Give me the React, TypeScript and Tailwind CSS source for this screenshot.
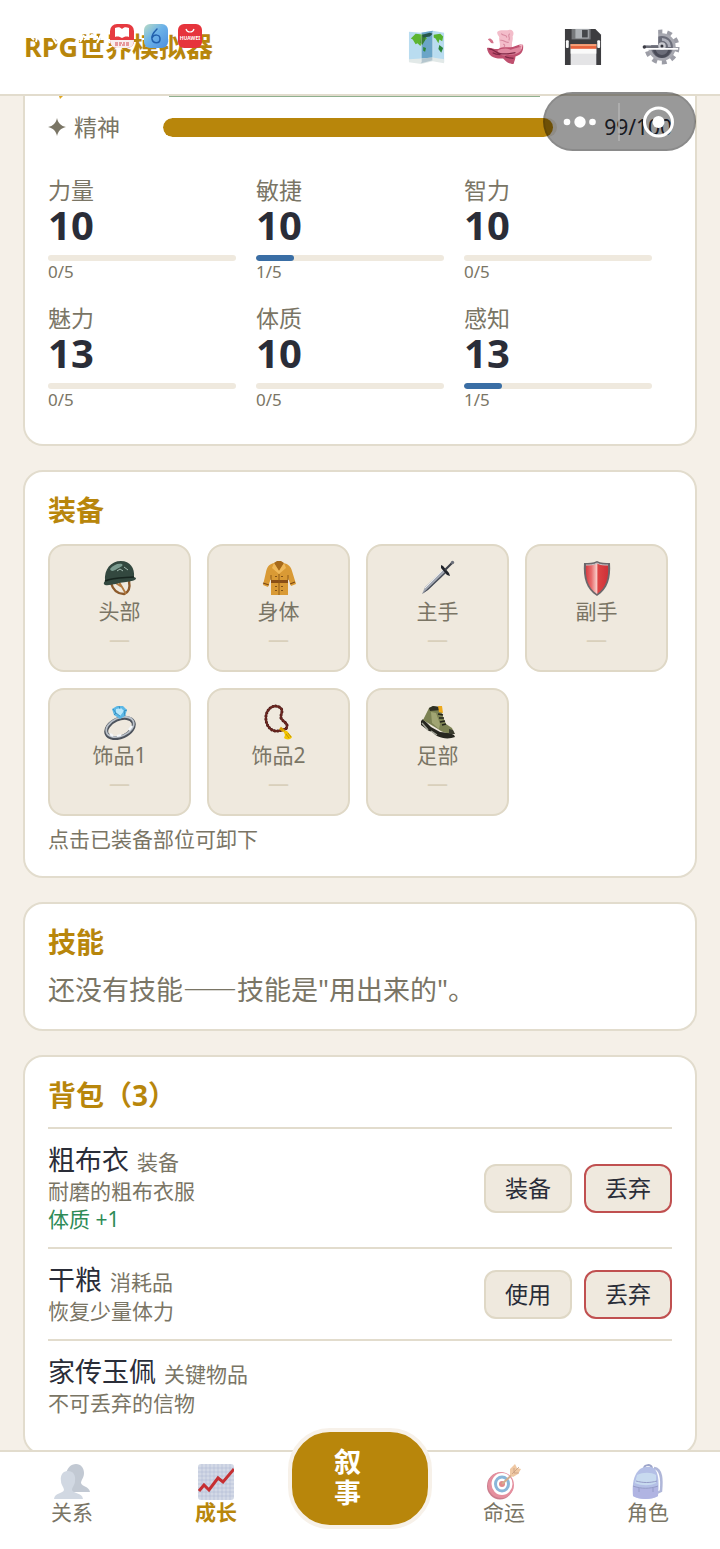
import React from "react"
import clsx from "clsx"

interface Attribute {
  name: string
  value: number
  progress: number
}

interface Slot {
  label: string
  icon: React.ReactNode
}

interface Item {
  name: string
  type: string
  description: string
  effect?: string
  action?: string
}

const MapIcon = () => (
  <svg viewBox="0 0 40 40" className="size-[38px]">
    <path d="M1 4l13 1 12-2 12 2v31l-12-2-12 3-13-2z" fill="#b9dcf0" />
    <path d="M14 5l12-2v31l-12 3z" fill="#6ba5c8" />
    <path d="M1 33l13-1 12-1 12 2v4l-12-2-12 3-13-2z" fill="#e2e9e8" />
    <path d="M14 32l12-1v3l-12 3z" fill="#b5c6ce" />
    <path d="M3 11l5-5 9 1 3 4-4 3-3 5-3-3-2 1-3-5z" fill="#5cb531" />
    <path d="M14 7l5 1-1 5-3 5-2-3z" fill="#3a7f34" />
    <path d="M27 7l7-1 3 3-1 5-3-2-1 4-3-5-2-1z" fill="#57b22d" />
    <path d="M16 20l3 1-1 4-2-1zM33 18l4 3-2 5-3-4z" fill="#2c8738" />
    <path d="M15 7l8-2 3 1-3 3-7 1z" fill="#27564c" />
    <path d="M14 5v31M26 4v30" stroke="#ffffff" strokeOpacity=".4" strokeWidth="1" />
  </svg>
)

const BrainIcon = () => (
  <svg viewBox="0 0 40 40" className="size-[38px]">
    <path d="M12 4c3-3 8-1 12-2 5-1 6 4 4 7 1 4-2 6 0 13H14c2-5-1-9 0-12 0-2-3-3-2-6z" fill="#f3bdca" />
    <path d="M1 21c4-1 8 2 12 1 5-3 9-1 15-2 4-1 8-4 11-2 1 7-3 11-8 12 0 3-1 4-2 8-5 0-8-3-11-6-8 1-16-2-17-11z" fill="#bf506f" />
    <path d="M12 24c5-3 10-3 14-1 4-2 9-2 11-4 1 2 1 5-3 7-5 3-9 1-14 3-4 0-7-2-8-5z" fill="#e089a0" />
    <path d="M3 22c5 0 7 4 12 5s10 0 16-1M20 30c3 2 6 1 9 2M7 26c3 2 6 2 8 2" stroke="#7e2744" strokeWidth="1.3" fill="none" />
    <path d="M16 6c3 3 5 0 6 4M25 6c-3 2 1 4-1 7M15 13c4-1 5 3 9 2M18 17c2 0 2 2 1 3" stroke="#d7899f" strokeWidth="1.1" fill="none" />
    <path d="M2 12c2-3 6 1 6 4-3 1-4-3-6-4z" fill="#d3728a" />
    <path d="M35 19l3-1-1 4" stroke="#f2b1c0" strokeWidth="1.2" fill="none" />
  </svg>
)

const SaveIcon = () => (
  <svg viewBox="0 0 40 40" className="size-[38px]">
    <path d="M1 1h32l6 6v32H1z" fill="#3d3d40" />
    <path d="M8 1h20v11H8z" fill="#77797c" />
    <path d="M12 1h14v10H12z" fill="#aeb2b6" />
    <path d="M19 2h6v8h-6z" fill="#45474a" />
    <path d="M7 17h27v22H7z" fill="#e4e4e6" />
    <path d="M7 17h27v5H7z" fill="#e8633c" />
    <path d="M7 17h27v2H7z" fill="#f4a27a" />
    <path d="M7 22h27v5H7z" fill="#fafafa" />
    <rect x="2" y="13" width="3" height="8" rx="1" fill="#f7f7f7" />
    <rect x="35" y="13" width="3" height="8" rx="1" fill="#f7f7f7" />
  </svg>
)

const GearIcon = () => (
  <svg viewBox="0 0 40 40" className="size-[38px]">
    <circle cx="21" cy="20" r="16" fill="none" stroke="#9c9da6" strokeWidth="5" strokeDasharray="5 5.050" />
    <circle cx="21" cy="20" r="13" fill="#6b6d79" stroke="#a7a8b0" strokeWidth="3" />
    <path d="M21 12a8 8 0 0 1 8 8" fill="none" stroke="#aeb0ba" strokeWidth="3" />
    <path d="M13 22a8 8 0 0 0 16 0" fill="none" stroke="#4a4c58" strokeWidth="3" />
    <path d="M0 0h17v18H0z" fill="#ffffff" />
    <circle cx="21" cy="19" r="4" fill="#c9cad0" />
    <circle cx="21" cy="19" r="1.6" fill="#33343c" />
    <path d="M3 21h35v2H3z" fill="#ffffff" />
    <path d="M1 19h16v2H1z" fill="#6d6f79" />
    <circle cx="2.500" cy="20" r="1.8" fill="#3b3c44" />
  </svg>
)

const HelmetIcon = () => (
  <svg viewBox="0 0 36 36" className="size-9">
    <path d="M9 23c2 7 7 11 13 11 6-2 6-8 5-13" fill="none" stroke="#8c5a2b" strokeWidth="2.400" />
    <path d="M12 22l8 5 4 7M17 22l3 5" fill="none" stroke="#b37a3f" strokeWidth="1.800" />
    <path d="M3 21C2 9 9 1 19 1c9 0 14 7 13 16l2 1c0 3-5 3-10 4-9 1-16 4-21 3-2-1-1-3 0-4z" fill="#33483f" />
    <path d="M8 9c3-4 8-6 12-5 2 2-2 3-5 5s-6 3-7 0z" fill="#7c9c90" />
    <path d="M3 21c9-4 20-3 29-4" fill="none" stroke="#17251f" strokeWidth="1.500" />
    <path d="M15 11l3-2 3 2M22 7l4 3" stroke="#a5bcb2" strokeWidth="1" fill="none" />
  </svg>
)

const CoatIcon = () => (
  <svg viewBox="0 0 36 36" className="size-9">
    <path d="M13 3C8 4 6 7 5 12L2 25l5 2 3-9v17h17V18l3 8 5-2-4-13c-1-4-3-7-9-8l-4-2z" fill="#d99a35" />
    <path d="M13 3l5 8 5-8-3-2h-4z" fill="#a66a1c" />
    <path d="M13 3l-2 5 7 6 7-6-2-5-5 8z" fill="#efb95b" />
    <path d="M10 20h17v3H10z" fill="#8a4f16" />
    <path d="M18 14v21M10 15v5M27 15v5" stroke="#8f5a19" strokeWidth="1" />
    <path d="M15 16v1M21 16v1M15 26v1M21 26v1M15 30v1M21 30v1" stroke="#653c10" strokeWidth="1.500" />
    <path d="M2 23l6 2M29 24l5-2" stroke="#7e4a14" strokeWidth="1.200" />
  </svg>
)

const SwordIcon = () => (
  <svg viewBox="0 0 36 36" className="size-9">
    <path d="M2 34l3-7L24 9l3 3L8 30z" fill="#a4a9b3" />
    <path d="M2 34L26 11l1 1L8 30z" fill="#454a55" />
    <path d="M5 28L23 10" stroke="#e4e7ec" strokeWidth="1" />
    <path d="M21 5l2 1 6 7 1 3-3-1-6-7z" fill="#20232a" />
    <path d="M25 10l7-7" stroke="#3d4049" strokeWidth="2.200" />
    <circle cx="32.500" cy="2.500" r="1.700" fill="#6d717b" />
  </svg>
)

const ShieldIcon = () => (
  <svg viewBox="0 0 36 36" className="size-9">
    <defs>
      <linearGradient id="shield" x1="0" y1="0" x2="1" y2="0">
        <stop offset="0" stopColor="#d63a40" />
        <stop offset=".25" stopColor="#e86d6d" />
        <stop offset=".48" stopColor="#f8c8c4" />
        <stop offset=".55" stopColor="#dc4444" />
        <stop offset="1" stopColor="#cf3038" />
      </linearGradient>
    </defs>
    <path d="M5 3c5 0 9 0 13-2 4 2 8 2 13 2 1 15-2 26-13 33C7 29 4 18 5 3z" fill="#6b676b" />
    <path d="M7 5c4 0 8 0 11-2 3 2 7 2 11 2 1 13-2 23-11 29C9 28 6 18 7 5z" fill="url(#shield)" />
    <path d="M7 5c4 0 8 0 11-2 3 2 7 2 11 2" stroke="#c9c6c9" strokeWidth="1" fill="none" />
  </svg>
)

const RingIcon = () => (
  <svg viewBox="0 0 36 36" className="size-9">
    <ellipse cx="18" cy="24" rx="14.500" ry="9" transform="rotate(-24 18 24)" fill="none" stroke="#4d535c" strokeWidth="4" />
    <ellipse cx="18" cy="23" rx="14.500" ry="9" transform="rotate(-24 18 23)" fill="none" stroke="#b9c0c8" strokeWidth="1.800" />
    <path d="M8 30l3 2M15 32l4-1M27 26l3-4" stroke="#f4f7fa" strokeWidth="2.200" />
    <path d="M10 5l5-3 6 0 4 4-2 6-5 3-6-4z" fill="#5cb8e6" />
    <path d="M14 5l5-1 3 3-4 5-4-3z" fill="#b8e7fa" />
    <path d="M11 5l3 4-2 2M25 6l-3 1 1 5M17 2l1 3M14 9l4 3" stroke="#2f86b8" strokeWidth=".8" fill="none" />
  </svg>
)

const BeadsIcon = () => (
  <svg viewBox="0 0 36 36" className="size-9">
    <path
      d="M17 27C9 28 4 20 5 12 6 5 12 0 18 3c6 3 1 7 2 11 2 4 7 5 6 9-1 3-5 3-9 4z"
      fill="none"
      stroke="#4a1715"
      strokeWidth="3"
      strokeLinecap="round"
      strokeDasharray="0.5 2.600"
    />
    <path
      d="M17 27C9 28 4 20 5 12 6 5 12 0 18 3c6 3 1 7 2 11 2 4 7 5 6 9-1 3-5 3-9 4z"
      fill="none"
      stroke="#6d2720"
      strokeWidth="1.500"
    />
    <path d="M19 24l4 3" stroke="#d69a00" strokeWidth="3" />
    <path d="M22 26l4 1 5 6c-1 3-6 3-8 1l1-3z" fill="#f2c500" />
    <path d="M25 30l3 4M27 29l3 4" stroke="#b88600" strokeWidth=".8" />
  </svg>
)

const BootIcon = () => (
  <svg viewBox="0 0 36 36" className="size-9">
    <path d="M1 17l2-2 8 8 9 5 10 1 4 2 1 2c-5 2-12 2-18-1-3-2-5-5-8-5L1 21z" fill="#26261f" />
    <path d="M9 4l4-2 8 2 2 9 3 7 6 4 2 5c-6 1-11 0-16-4L3 16z" fill="#7c8253" />
    <path d="M9 4l4-2 8 1v3L10 7z" fill="#2f3024" />
    <path d="M18 2h4l1 7-4-1z" fill="#eda91c" />
    <path d="M11 8l1 11 7 6 1-5-4-11z" fill="#a1a573" />
    <path d="M18 10l5 1M19 14l5 0M20 18l5-1M22 21l4-1" stroke="#22241b" strokeWidth="1.500" />
    <path d="M2 19l6 7M11 27l6 4" stroke="#a5a79a" strokeWidth="1.400" />
    <path d="M29 25l4 1 2 4-6 0z" fill="#3a3b2e" />
  </svg>
)

const PeopleIcon = () => (
  <svg viewBox="0 0 36 36" className="size-9 opacity-60">
    <path d="M22 0c5 0 8 4 8 9 0 5-3 7-3 10 1 4 8 3 9 9H12V10c1-6 5-10 10-10z" fill="#9aa6b6" />
    <path d="M14 7c5 0 8 4 7 10 0 4-3 6-3 9 1 4 10 2 11 9H0c1-7 9-5 10-9 0-3-3-5-3-9-1-6 2-10 7-10z" fill="#b3bfd0" />
  </svg>
)

const ChartIcon = () => (
  <svg viewBox="0 0 36 36" className="size-9">
    <rect width="36" height="36" rx="3" fill="#d3d9e6" />
    <path
      d="M4 0v36M8 0v36M12 0v36M16 0v36M20 0v36M24 0v36M28 0v36M32 0v36M0 4h36M0 8h36M0 12h36M0 16h36M0 20h36M0 24h36M0 28h36M0 32h36"
      stroke="#a9b4d0"
      strokeWidth=".5"
    />
    <path d="M1 27l5-6 5 5 9-12 5 4L36 5" stroke="#c62f32" strokeWidth="3" fill="none" />
  </svg>
)

const TargetIcon = () => (
  <svg viewBox="0 0 36 36" className="size-9 opacity-60">
    <ellipse cx="14" cy="22" rx="13" ry="13.500" fill="#a82742" />
    <ellipse cx="15" cy="21" rx="13" ry="13" fill="#d4465f" />
    <ellipse cx="16" cy="20" rx="10.500" ry="11" fill="#ffffff" />
    <ellipse cx="16" cy="20" rx="8" ry="8.500" fill="#3d86c0" />
    <ellipse cx="16" cy="20" rx="5" ry="5.500" fill="#ffffff" />
    <ellipse cx="16" cy="20" rx="3" ry="3" fill="#cf3d3d" />
    <path d="M16 20L29 8" stroke="#b87842" strokeWidth="2" />
    <path d="M24 11l0-6 5-5 2 4 4 1-3 5-5 3z" fill="#e6a467" />
    <path d="M26 10l7-7M28 4v5h5" stroke="#a25e2d" strokeWidth=".8" fill="none" />
  </svg>
)

const BackpackIcon = () => (
  <svg viewBox="0 0 36 36" className="size-9 opacity-60">
    <path d="M24 4c8 1 8 12 7 23l-4 2" fill="none" stroke="#7c88c0" strokeWidth="2.500" />
    <path d="M14 5c0-5 7-5 8-1" fill="none" stroke="#5d6aa8" strokeWidth="2" />
    <path d="M10 5c5-3 11-3 15 0 4 6 4 14 3 27-5 4-20 4-25 0-1-10 0-21 7-27z" fill="#8396d6" />
    <path d="M7 11c6-3 14-3 19 0v8c-6 3-14 3-21 0z" fill="#a5c3e6" />
    <path d="M3 22c8 3 17 3 25 0v10c-7 4-18 4-25 0z" fill="#7d83d0" />
    <path d="M3 22c8 3 17 3 25 0M6 17c7 2 14 2 21 0M9 24v4M23 24v4" stroke="#4f5ba3" strokeWidth="1" fill="none" />
  </svg>
)

// device status icons that sit over the page title
const StatusIcons = () => (
  <svg viewBox="0 0 200 34" className="pointer-events-none absolute left-6 top-5 h-[34px] w-[200px]">
    <g fill="none" stroke="#ffffff" strokeWidth="2">
      <path d="M5 15l5 5M12 22l2-9M27 15l5 8 8-6M56 22l4-7M60 20l8-5 8 5M73 23l4-8" />
      <path d="M60 17h14M80 15l6 8M82 20h4" />
    </g>
    <rect x="86" y="4" width="24" height="24" rx="7" fill="#e63a40" />
    <path d="M86 20h24c0 5-3 8-7 8H93c-4 0-7-3-7-8z" fill="#f7eeee" />
    <path d="M91 8c3-1 5-1 7 1 2-2 4-2 7-1v9c-3-1-5 0-7 1-2-1-4-2-7-1z" fill="#ffffff" />
    <path d="M91 23h3M95 23h3M99 23h2M102 23h3M91 25h3M95 25h2M98 25h3M102 25h3" stroke="#d7444b" strokeWidth="1" />
    <defs>
      <linearGradient id="six" x1="0" y1="0" x2="1" y2="1">
        <stop offset="0" stopColor="#b9dcc5" />
        <stop offset=".45" stopColor="#6cb2e8" />
        <stop offset="1" stopColor="#4d8fe0" />
      </linearGradient>
    </defs>
    <rect x="120" y="4" width="24" height="24" rx="6" fill="url(#six)" />
    <path d="M133 9c-4 4-6 7-5 10 1 5 8 5 8 0 0-5-6-5-8-1" fill="none" stroke="#2260ad" strokeWidth="1.500" strokeLinecap="round" />
    <rect x="154" y="4" width="24" height="24" rx="6" fill="#e6343c" />
    <path d="M162 9c1 4 7 4 8 0" fill="none" stroke="#ffffff" strokeWidth="1.200" />
    <text x="166" y="20" textAnchor="middle" fontSize="5" fontWeight="700" fill="#ffffff">
      HUAWEI
    </text>
  </svg>
)

const Capsule = () => (
  <div className="absolute right-6 top-[92px] flex h-[59px] w-[153px] items-center rounded-full border-2 border-black/10 bg-black/40">
    <svg viewBox="0 0 149 55" className="w-full">
      <circle cx="22" cy="28" r="3.300" fill="#ffffff" />
      <circle cx="35" cy="28" r="5.700" fill="#ffffff" />
      <circle cx="47.500" cy="28" r="3.300" fill="#ffffff" />
      <path d="M74 9v38" stroke="#b5b5b5" strokeWidth="1.500" />
      <circle cx="113.500" cy="28" r="14" fill="none" stroke="#ffffff" strokeWidth="3" />
      <circle cx="113.500" cy="28" r="6" fill="#ffffff" />
    </svg>
  </div>
)

const tools = [
  { label: "地图", icon: <MapIcon /> },
  { label: "记忆", icon: <BrainIcon /> },
  { label: "存档", icon: <SaveIcon /> },
  { label: "设置", icon: <GearIcon /> },
]

const attributes: Attribute[] = [
  { name: "力量", value: 10, progress: 0 },
  { name: "敏捷", value: 10, progress: 1 },
  { name: "智力", value: 10, progress: 0 },
  { name: "魅力", value: 13, progress: 0 },
  { name: "体质", value: 10, progress: 0 },
  { name: "感知", value: 13, progress: 1 },
]

const slots: Slot[] = [
  { label: "头部", icon: <HelmetIcon /> },
  { label: "身体", icon: <CoatIcon /> },
  { label: "主手", icon: <SwordIcon /> },
  { label: "副手", icon: <ShieldIcon /> },
  { label: "饰品1", icon: <RingIcon /> },
  { label: "饰品2", icon: <BeadsIcon /> },
  { label: "足部", icon: <BootIcon /> },
]

const items: Item[] = [
  {
    name: "粗布衣",
    type: "装备",
    description: "耐磨的粗布衣服",
    effect: "体质 +1",
    action: "装备",
  },
  { name: "干粮", type: "消耗品", description: "恢复少量体力", action: "使用" },
  { name: "家传玉佩", type: "关键物品", description: "不可丢弃的信物" },
]

const Card = ({
  title,
  children,
}: {
  title: string
  children: React.ReactNode
}) => (
  <section className="rounded-[20px] border-2 border-[#e2dccd] bg-white px-[23px] pt-5 pb-[22px]">
    <h2 className="text-[28px] leading-9 font-bold text-[#b8860b]">{title}</h2>
    {children}
  </section>
)

const NavItem = ({
  label,
  icon,
  active,
}: {
  label: string
  icon: React.ReactNode
  active?: boolean
}) => (
  <a
    href="#"
    className={clsx(
      "flex flex-1 flex-col items-center pt-3 text-[21px] leading-6",
      active ? "font-bold text-[#b8860b]" : "text-[#7a7565]"
    )}
  >
    {icon}
    {label}
  </a>
)

const App = () => {
  return (
    <div
      lang="zh-CN"
      className="relative flex h-screen flex-col bg-[#f5f0e8] font-['Noto_Sans','Noto_Sans_CJK_SC',sans-serif] text-[#2a2d38]"
    >
      <header className="flex h-24 shrink-0 items-center justify-between border-b-2 border-[#e2dccd] bg-white px-6">
        <h1 className="text-[27px] leading-9 font-bold text-[#b8860b]">
          RPG世界模拟器
        </h1>
        <div className="flex gap-10 pr-4">
          {tools.map((tool) => (
            <button key={tool.label} aria-label={tool.label}>
              {tool.icon}
            </button>
          ))}
        </div>
      </header>

      <main className="flex min-h-0 flex-1 flex-col gap-6 overflow-y-auto px-[23px] [scrollbar-width:none]">
        <section className="shrink-0 rounded-b-[20px] border-2 border-t-0 border-[#e2dccd] bg-white px-[23px] pb-[33px]">
          <div className="flex h-[14px] items-start">
            <svg viewBox="0 0 24 4" className="h-1 w-6">
              <path d="M11 0h4l-3 3z" fill="#e0a820" />
            </svg>
            <div className="ml-[97px] h-px w-[371px] bg-[#8fb08f]" />
          </div>
          <div className="flex h-[34px] items-center text-[23px] leading-[34px] text-[#7a7565]">
            <svg viewBox="0 0 18 18" className="mr-2 size-[18px]">
              <path d="M9 0c1 5 4 8 9 9-5 1-8 4-9 9-1-5-4-8-9-9 5-1 8-4 9-9z" fill="#7a7565" />
            </svg>
            <span className="w-[89px]">精神</span>
            <div className="h-[19px] flex-1 overflow-hidden rounded-full bg-[#efe9de]">
              <div className="h-full rounded-full bg-[#b8860b]" style={{ width: "99%" }} />
            </div>
            <span className="w-[115px] text-right text-[21px] text-[#2a2d38]">99/100</span>
          </div>
          <div className="mt-[31px] grid grid-cols-3 gap-y-5">
            {attributes.map((attr) => (
              <div key={attr.name} className="pr-5">
                <div className="text-[23px] leading-[30px] text-[#7a7565]">{attr.name}</div>
                <div className="text-[40px] leading-[40px] font-bold">{attr.value}</div>
                <div className="mt-[10px] h-[6px] overflow-hidden rounded-full bg-[#efe9de]">
                  <div
                    className="h-full rounded-full bg-[#3a6ea5]"
                    style={{ width: `${(attr.progress / 5) * 100}%` }}
                  />
                </div>
                <div className="text-[17px] leading-[22px] text-[#7a7565]">
                  {attr.progress}/5
                </div>
              </div>
            ))}
          </div>
        </section>

        <Card title="装备">
          <div className="mt-4 grid grid-cols-4 gap-4 pr-1">
            {slots.map((slot) => (
              <button
                key={slot.label}
                className="flex h-32 flex-col items-center rounded-2xl border-2 border-[#dfd8c6] bg-[#efe9de] pt-[14px] text-[21px] text-[#7a7565]"
              >
                {slot.icon}
                <span className="leading-[31px]">{slot.label}</span>
                <span className="leading-6 text-[#d9d0bb]">—</span>
              </button>
            ))}
          </div>
          <p className="mt-2 text-[21px] leading-[30px] text-[#7a7565]">
            点击已装备部位可卸下
          </p>
        </Card>

        <Card title="技能">
          <p className="mt-3 text-[27px] leading-[34px] text-[#7a7565]">
            还没有技能
            <span className="font-['Noto_Sans_CJK_SC',sans-serif]">——</span>
            技能是"用出来的"。
          </p>
        </Card>

        <Card title="背包（3）">
          <ul className="mt-[14px]">
            {items.map((item) => (
              <li
                key={item.name}
                className="flex items-center justify-between border-t-2 border-[#e2dccd] py-[14px]"
              >
                <div className="text-[21px] leading-7 text-[#7a7565]">
                  <div className="flex h-[34px] items-baseline gap-2 leading-[34px]">
                    <h3 className="text-[27px] text-[#2a2d38]">{item.name}</h3>
                    <span>{item.type}</span>
                  </div>
                  <p>{item.description}</p>
                  {item.effect && <p className="text-[#2e8b57]">{item.effect}</p>}
                </div>
                {item.action && (
                  <div className="flex gap-3 text-[23px] leading-[45px]">
                    <button className="rounded-xl border-2 border-[#dfd8c6] bg-[#efe9de] px-[19px]">
                      {item.action}
                    </button>
                    <button className="rounded-xl border-2 border-[#c05050] bg-[#efe9de] px-[19px]">
                      丢弃
                    </button>
                  </div>
                )}
              </li>
            ))}
          </ul>
        </Card>
      </main>

      <nav className="flex h-[99px] shrink-0 border-t-2 border-[#e2dccd] bg-white">
        <NavItem label="关系" icon={<PeopleIcon />} />
        <NavItem label="成长" icon={<ChartIcon />} active />
        <div className="relative flex-1">
          <button className="absolute -top-6 left-0 flex h-[101px] w-full items-center rounded-[42px] border-4 border-[#f7f1e9] bg-[#b8860b] pb-[3px] pl-[42px] text-left text-[27px] leading-[31px] font-bold text-white">
            叙
            <br />事
          </button>
        </div>
        <NavItem label="命运" icon={<TargetIcon />} />
        <NavItem label="角色" icon={<BackpackIcon />} />
      </nav>

      <StatusIcons />
      <Capsule />
    </div>
  )
}

export default App
